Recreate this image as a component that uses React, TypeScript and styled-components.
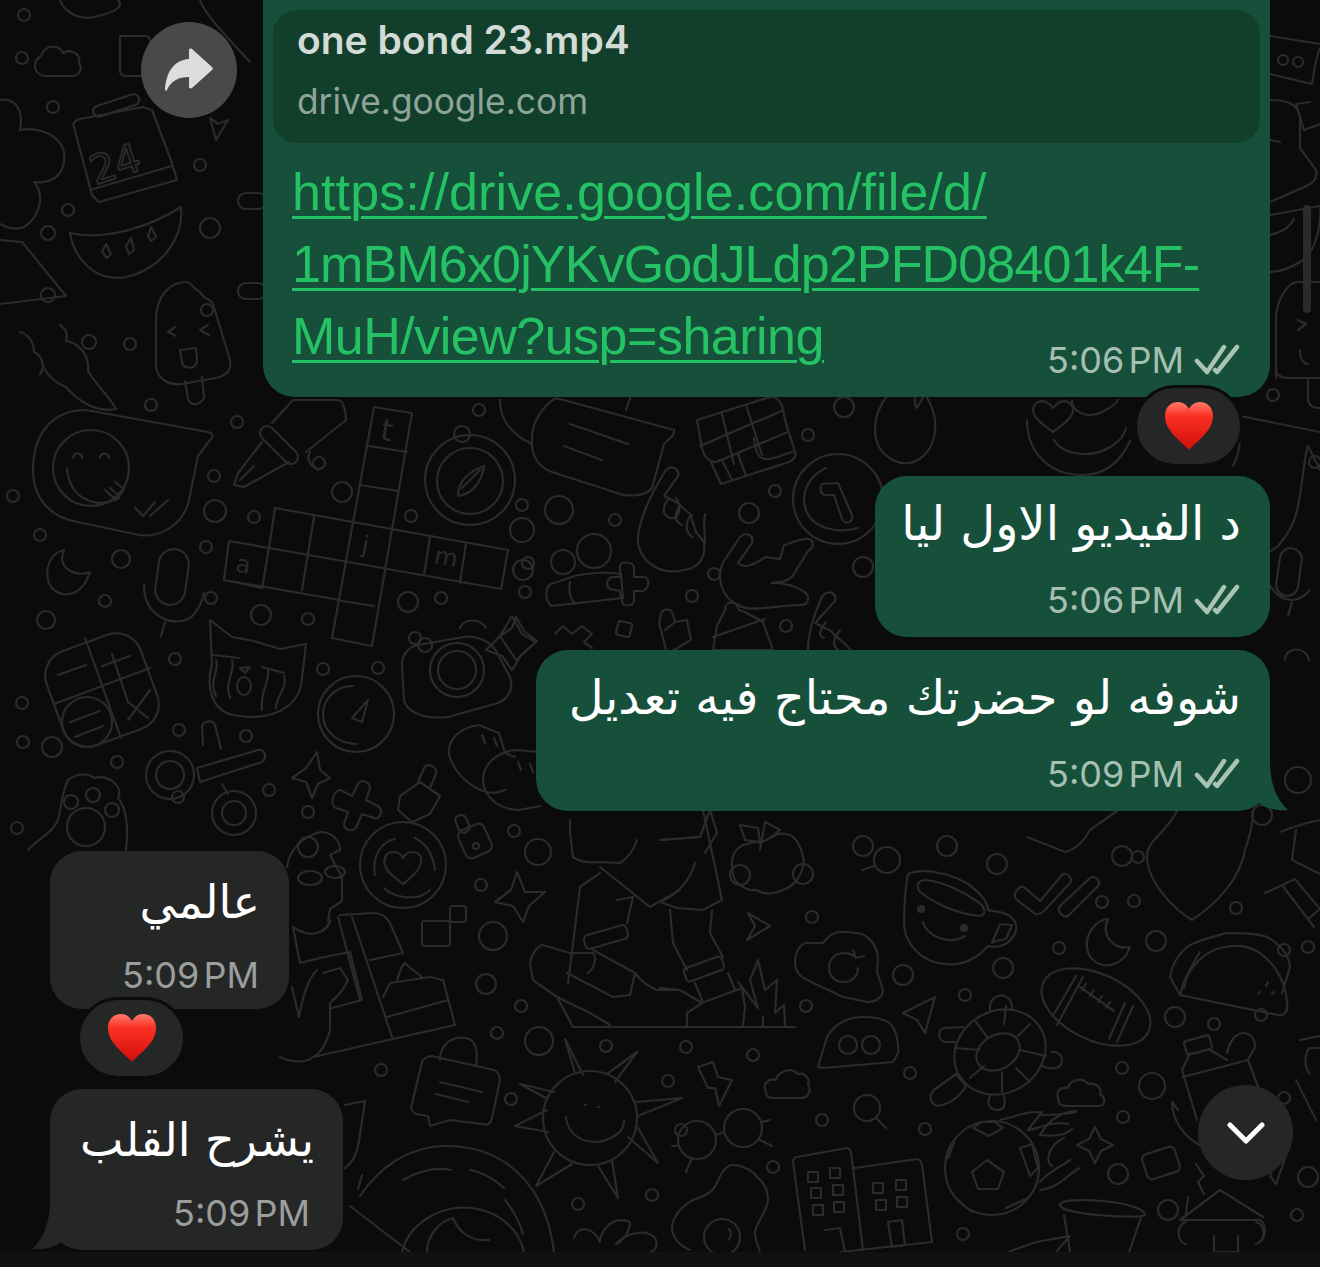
import React from "react";
import styled, { createGlobalStyle } from "styled-components";

const GlobalStyle = createGlobalStyle`
  html, body {
    margin: 0;
    padding: 0;
    background: #0b0b0b;
  }
`;

const Screen = styled.div`
  position: relative;
  display: flex;
  flex-direction: column;
  width: 1320px;
  height: 1267px;
  overflow: hidden;
  background: #0b0b0b;
  font-family: Inter, "Liberation Sans", sans-serif;
`;

const WallpaperSvg = styled.svg`
  position: absolute;
  inset: 0;
  fill: none;
  stroke: #2b2b2b;
  stroke-width: 2.2;
  stroke-linecap: round;
  stroke-linejoin: round;
  text {
    fill: #2b2b2b;
    stroke: none;
    font-family: "DejaVu Sans", sans-serif;
  }
  text.outline {
    fill: none;
    stroke: #2b2b2b;
    stroke-width: 1.8;
  }
`;

const Thread = styled.div`
  position: relative;
  flex: 1;
  display: flex;
  flex-direction: column;
  padding: 0 50px;
`;

const Bubble = styled.div<{ $out?: boolean; $gap?: number; $width: number; $height?: number }>`
  position: relative;
  box-sizing: border-box;
  width: ${(p) => p.$width}px;
  height: ${(p) => p.$height ?? 161}px;
  margin-top: ${(p) => p.$gap ?? 0}px;
  align-self: ${(p) => (p.$out ? "flex-end" : "flex-start")};
  padding-right: 30px;
  border-radius: 32px;
  background: ${(p) => (p.$out ? "#17503a" : "#252726")};
`;

const LinkBubble = styled.div`
  position: relative;
  box-sizing: border-box;
  align-self: flex-end;
  width: 1007px;
  height: 397px;
  padding: 10px 10px 0;
  border-radius: 0 0 32px 32px;
  background: #17503a;
`;

const Preview = styled.div`
  box-sizing: border-box;
  height: 133px;
  padding: 8px 24px 0;
  border-radius: 24px;
  background: #123e2c;
`;

const PreviewTitle = styled.div`
  font-size: 39px;
  line-height: 44px;
  font-weight: 600;
  color: #d3dbd6;
`;

const PreviewHost = styled.div`
  margin-top: 19px;
  font-size: 35.3px;
  line-height: 42px;
  color: #8fa59a;
`;

const UrlText = styled.a`
  display: block;
  margin: 13px 0 0 19px;
  font-family: "Liberation Sans", Arial, sans-serif;
  font-size: 52px;
  line-height: 72px;
  color: #25c265;
  text-decoration: underline;
  text-decoration-thickness: 3px;
  text-underline-offset: 6px;
`;

const UrlLine = styled.span<{ $track: number }>`
  display: block;
  letter-spacing: ${(p) => p.$track}px;
`;

const MessageText = styled.div<{ $small?: boolean }>`
  position: relative;
  height: 100px;
  margin-right: -1px;
  font-family: "DejaVu Sans", sans-serif;
  font-size: ${(p) => (p.$small ? 46 : 48)}px;
  line-height: ${(p) => (p.$small ? 102 : 95)}px;
  text-align: right;
  color: #fff;
`;

const Meta = styled.div<{ $out?: boolean; $pull?: number; $inset?: number }>`
  position: relative;
  display: flex;
  justify-content: flex-end;
  align-items: center;
  gap: 10px;
  height: 40px;
  margin-top: ${(p) => p.$pull ?? 4}px;
  margin-right: ${(p) => p.$inset ?? 0}px;
  font-size: 36px;
  word-spacing: -6px;
  color: ${(p) => (p.$out ? "#a5bfb2" : "#9c9d9d")};
`;

const Reaction = styled.div<{ $side: "left" | "right" }>`
  position: absolute;
  ${(p) => p.$side}: 27px;
  bottom: -70px;
  display: flex;
  align-items: center;
  justify-content: center;
  width: 103px;
  height: 76px;
  border: 3px solid #0b0b0b;
  border-radius: 41px;
  background: #252626;
`;

const ForwardButton = styled.div`
  position: absolute;
  left: -122px;
  top: 22px;
  display: flex;
  align-items: center;
  justify-content: center;
  width: 96px;
  height: 96px;
  border-radius: 50%;
  background: #48494b;
`;

const ScrollButton = styled.div`
  position: absolute;
  right: 27px;
  bottom: 72px;
  display: flex;
  align-items: center;
  justify-content: center;
  width: 95px;
  height: 95px;
  border-radius: 50%;
  background: #252726;
`;

const ScrollThumb = styled.div`
  position: absolute;
  top: 205px;
  right: 9px;
  width: 8px;
  height: 108px;
  border-radius: 4px;
  background: #2b2b2b;
`;

const TailSvg = styled.svg<{ $side: "left" | "right" }>`
  position: absolute;
  bottom: 0;
  ${(p) => p.$side}: -18px;
`;

const BottomBar = styled.div`
  position: relative;
  height: 15px;
  background: #101211;
`;

const dots: [number, number, number][] = [
  [24, 15, 6], [22, 58, 6], [53, 107, 6], [48, 233, 7], [68, 210, 6], [48, 295, 7], [89, 342, 7],
  [130, 344, 6], [151, 405, 6], [210, 228, 10], [200, 165, 6], [207, 310, 6], [13, 496, 6],
  [40, 535, 6], [121, 559, 9], [46, 620, 9], [105, 601, 6], [237, 422, 6], [214, 476, 6],
  [215, 511, 11], [254, 517, 6], [206, 547, 6], [211, 598, 6], [261, 615, 10], [308, 619, 6],
  [319, 463, 6], [342, 492, 10], [411, 516, 6], [408, 602, 10], [441, 598, 6], [522, 530, 12],
  [22, 703, 6], [23, 742, 6], [52, 747, 10], [117, 762, 6], [175, 659, 6], [323, 669, 6], [378, 668, 6],
  [415, 638, 6], [179, 730, 6], [246, 736, 6], [178, 797, 6], [269, 790, 6], [308, 812, 6],
  [17, 828, 6], [523, 570, 10], [522, 505, 6], [559, 510, 14], [479, 410, 6],
  [528, 563, 6], [525, 592, 6], [615, 520, 6], [749, 513, 10], [775, 491, 6],
  [808, 435, 6], [844, 407, 10], [863, 567, 10], [714, 574, 6], [692, 596, 6], [786, 626, 6],
  [308, 847, 10], [514, 831, 6], [538, 852, 13], [481, 885, 6], [493, 936, 14],
  [486, 984, 10], [521, 1006, 6], [497, 1033, 6], [539, 1041, 14], [606, 1046, 6], [668, 1081, 6],
  [681, 1130, 6], [381, 1070, 6], [325, 1131, 6], [511, 1099, 6], [578, 1204, 6], [652, 1195, 6],
  [740, 875, 10], [803, 874, 10], [812, 917, 6], [863, 846, 10], [947, 846, 10], [997, 864, 10], [903, 975, 10],
  [1003, 968, 10], [965, 995, 6], [806, 1006, 6], [910, 1073, 6], [686, 1047, 6], [753, 1055, 6],
  [822, 1120, 6], [925, 1129, 6], [773, 1167, 6], [963, 1234, 6], [1138, 857, 6], [1122, 856, 10],
  [1262, 815, 10], [1102, 902, 6], [1134, 901, 6], [1236, 908, 6], [1059, 948, 6], [1156, 941, 10],
  [1308, 947, 6], [1261, 1015, 6], [1175, 1017, 10], [1214, 1024, 6], [1122, 1068, 6], [1152, 1086, 13],
  [1284, 1098, 6], [1123, 1117, 6], [1118, 1174, 10], [1168, 1210, 10], [1297, 1215, 6],
  [1308, 1177, 10], [1273, 395, 6], [1298, 780, 13], [1315, 462, 6], [1284, 950, 6],
];

function Wallpaper() {
  return (
    <WallpaperSvg width={1320} height={1252} viewBox="0 0 1320 1252">
      {dots.map(([cx, cy, r], i) => (
        <circle key={i} cx={cx} cy={cy} r={r} />
      ))}

      {/* top left */}
      <path d="M41 56c4-12 18-12 22-3 8-5 18 1 16 10 5 8-2 14-10 13H46c-12 0-15-14-5-20z" />
      <path d="M0 100c14-2 24 8 20 30 18-4 48 6 44 32-2 16-16 22-30 20 12 14 4 34-6 42-8 8-20 4-28 0" />
      <path d="M0 240l22 2 44 54-66 8" />
      <path d="M74 127c-2-5 2-7 6-8l63-12 9 3 20 53 5 17-78 22-7-7z" />
      <path d="M90 190l82-24" />
      <rect x="92" y="100" width="48" height="11" rx="5.5" transform="rotate(-18 116 105)" />
      <text className="outline" x="90" y="178" fontSize="40" transform="rotate(-18 115 165)">24</text>
      <path d="M120 36h26c4 0 4 4 4 6v34h-24c-4 0-6-2-6-6z" />
      <path d="M70 233c34 8 80-6 111-26 3 32-20 62-55 70-32 6-52-20-56-44z" />
      <path d="M102 252l4-8 5 10-4 4zM126 246l5-8 3 12-5 4zM148 236l3-9 5 10-5 4z" />
      <path d="M156 320c0-24 14-38 30-38 6 0 8 8 14 10 4 8 10 6 13 12l17 56c2 10-4 16-14 18l-34 6c-14 2-26-6-26-20z" />
      <path d="M185 381l3 18c2 8 14 6 16-2l-2-20M175 327l-7 5 8 4M208 325l-8 5 9 5" />
      <path d="M180 350l16-2 1 12c0 10-14 10-15 2z" />
      <path d="M60 325c6 4 8 10 6 16 14 2 24 16 22 30 8 14 22 26 28 38-20 4-38-8-50-22-10-4-20-12-24-24" />
      <path d="M20 332c8 2 14 10 14 20 8 4 12 14 6 22" />
      <path d="M210 118l6 22 12-20-10 4zM60 0c4 12 20 22 38 16 18-4 26-10 20-16M200 0c4 14 30 40 50 62" />
      <rect x="238" y="193" width="28" height="16" rx="8" />
      <rect x="238" y="283" width="28" height="16" rx="8" />

      {/* speech bubble, smiley */}
      <path d="M86 410l122 22c6 2 6 4 2 8l-12 16-9 44c-6 26-30 38-50 35l-66-14c-26-6-40-26-40-50 0-36 18-61 53-61z" />
      <circle cx="91" cy="468" r="38" />
      <path d="M67 468c2 30 28 42 52 30M73 458c1-6 8-6 9 0M100 458c1-6 8-6 9 0" />
      <path d="M105 490l11 10 8-11-9-7M110 488l7 6" />
      <path d="M135 508l8 8 12-14M150 516l18-16" />

      {/* pen */}
      <path d="M272 423l21-23h45c6 0 8 14 8 20l-40 32" />
      <rect x="255" y="438" width="48" height="14" rx="7" transform="rotate(45 279 445)" />
      <path d="M262 442l-24 31-4 12 10 2 45-25M240 480l14-14M310 452c-4 6 0 14 8 18" />

      {/* crossword */}
      <path d="M374 407l38 6-40 233-40-8zM275 508l233 42-7 39-232-41zM229 541l40 7-7 40-38-8zM224 580l116 20" />
      <path d="M369 446l38 6M360 485l38 6M336 600l38 6M314 517l-12 73M430 537l-6 38M466 543l-6 40" />
      <text x="381" y="440" fontSize="30" transform="rotate(10 385 430)">t</text>
      <text x="362" y="553" fontSize="24" transform="rotate(10 365 545)">j</text>
      <text x="236" y="572" fontSize="24" transform="rotate(10 240 565)">a</text>
      <text x="434" y="565" fontSize="24" transform="rotate(10 445 560)">m</text>

      {/* compass */}
      <circle cx="470" cy="480" r="45" />
      <circle cx="470" cy="481" r="33" />
      <circle cx="462" cy="434" r="8" />
      <path d="M458 496c0-14 10-24 26-30-2 16-12 28-26 30zM462 488l18-18" />

      {/* mic, moon */}
      <rect x="157" y="549" width="30" height="56" rx="15" transform="rotate(8 172 577)" />
      <path d="M144 585c0 30 24 38 36 36 12 0 20-12 24-28M165 622l-4 14" />
      <path d="M64 550c-18 4-22 30-10 40 14 10 30 2 36-18-14 6-34-4-26-22z" />

      {/* calculator */}
      <rect x="52" y="640" width="100" height="100" rx="26" transform="rotate(-20 102 690)" />
      <path d="M85 638l36 100M54 704l96-36M58 675l28-10M112 654l16 48M102 666l28-10M128 702l20 16M150 690l-22 30" />
      <circle cx="87" cy="722" r="25" />
      <path d="M70 722l30-11M75 737l28-11" />

      {/* cat */}
      <path d="M210 620l22 17 22 4 26 8 26-5-4 34c-2 32-34 42-62 38-30-2-34-30-28-52z" />
      <path d="M213 655l26 3M262 667l22 6M216 660c4 12-8 20 0 36M232 660c4 12-8 20-2 38M268 670c2 12-8 20-6 40M284 676c4 12-8 20-8 32" />
      <ellipse cx="244" cy="686" rx="7" ry="9" />
      <path d="M240 668l10-1-5 6z" />

      {/* gauge */}
      <circle cx="356" cy="714" r="38" />
      <path d="M353 686c-20 0-30 16-30 28 0 20 18 30 34 30" />
      <path d="M352 718l16-18-6 22z" />

      {/* camera */}
      <path d="M402 665c0-10 6-18 16-20l46-8c12-2 26 4 32 14l14 26c4 12-2 22-12 26l-50 14c-14 2-38 0-44-16z" />
      <circle cx="457" cy="670" r="27" />
      <circle cx="457" cy="670" r="19" />
      <circle cx="425" cy="645" r="7" />
      <path d="M460 628c4-10 20-10 26 0M512 616l10 18 14 8-14 12-10 16-10-14-16-6 14-14z" />

      {/* scissors */}
      <circle cx="170" cy="775" r="24" />
      <circle cx="170" cy="775" r="14" />
      <path d="M197 768l61-18c6-2 10 8 4 12l-62 20zM203 745l-1-18c0-6 12-8 13-2l6 24M222 784l6 10" />
      <circle cx="234" cy="813" r="22" />
      <circle cx="234" cy="813" r="12" />

      {/* paw */}
      <path d="M28 850c8-10 24-16 30-30 4-16 4-28 10-40 10-8 22-6 26-2 14-4 30 8 24 20 10 12 10 34 8 52" />
      <circle cx="86" cy="827" r="19" />
      <circle cx="71" cy="802" r="7" />
      <circle cx="93" cy="795" r="7" />
      <circle cx="112" cy="810" r="7" />

      {/* star, plus, lock */}
      <path d="M317 752l3 18 10 8-12 6-6 14-6-16-14-4 14-10z" />
      <path d="M340 790l12 6 6-12c2-6 12-2 12 4l-4 12 12 6c6 4 2 14-4 12l-12-4-6 14c-4 4-12 2-12-4l4-12-12-4c-6-2-4-16 4-18z" />
      <path d="M400 796l20-14 20 14-10 18-18 8-14-12zM418 782l6-14c2-6 14-2 12 6l-6 14" />

      {/* dumplings */}
      <path d="M449 755c-2-16 12-28 30-30l10 4 10 4 6 20 10 4M505 790c-20 10-48-10-56-35" />
      <path d="M483 780c0-14 12-28 32-30l25 2M483 780c0 16 16 30 36 30l21-4" />
      <path d="M482 735l3 8M494 738l3 8M518 762l3 8M530 764l3 8" />

      {/* speech bubble 2 */}
      <path d="M556 398l118 32c2 4-6 10-10 14l-12 44c-6 8-24 10-38 4l-62-20c-12-4-22-16-20-34 0-14 8-30 24-40z" />
      <path d="M570 424l58 20M564 446l38 14" />
      <path d="M500 400c0 20 10 34 32 44M630 398l-4 12" />

      {/* gift */}
      <path d="M697 420l70-22c6-2 12 0 15 8l6 26-72 30c-8 0-12-6-14-14zM700 446l84-36M722 414l12 50M746 405l16 50" />
      <path d="M710 460l11 24 68-22c4-2 8-6 6-10l-10-32M732 480l-10-20M746 476l-8-22M754 438c2 18 6 24 20 20l18-6" />

      {/* hands */}
      <path d="M666 470c6-6 14 0 12 6l-14 20 12 6 14 12 6 18 8 10c2 14-4 26-20 28-24 6-42-8-46-26-2-20 14-52 28-74z" />
      <path d="M668 500c-4 4-8 14 2 18 10 2 12-12 6-20M680 505c-4 6-8 16 2 20M692 515c-6 4-8 16 0 22M705 514c-2 12 0 18 0 28" />
      <path d="M740 537c6-6 14-2 12 6l-14 20c8 8 20-2 28-6l14 2 4-14c8-2 24-10 28-4 2 4 0 8-4 10l-16 26c-10 6-8 4-20 6 16 0 34 6 36 14 0 8-4 8-8 8-22 0-50 8-62 0-18-8-22-30-14-44z" />

      {/* clock */}
      <circle cx="838" cy="499" r="45" />
      <path d="M826 468c-18 8-26 26-20 42 6 18 30 24 52 18" />
      <path d="M822 484l16-1 14 32c2 8-8 10-10 4l-8-24-10 0c-4-2-4-8-2-11z" />

      {/* people */}
      <circle cx="594" cy="551" r="17" />
      <circle cx="563" cy="562" r="12" />
      <path d="M547 600c-2-8 0-14 4-16l18-6c14-6 40-6 52-4l2 24-72 8zM570 582c-2 8 0 18 6 22" />
      <path d="M612 577h8l0-10c0-6 12-6 14 0v10h10c6 0 6 12-2 14h-8v10c-2 6-12 6-12 0l-2-10-10-2c-4-2-4-10 2-12z" />

      {/* row just above the long bubble */}
      <path d="M516 617l8 14 13 10-13 12-8 7-8-12-8-12 12-8zM555 634l8-8 9 8 10-8 10 8-8 8 8 6" />
      <rect x="617" y="622" width="14" height="14" rx="2" transform="rotate(14 624 629)" />
      <path d="M661 630c-4-8 0-12 0-16 2-6 10-6 12 0l2 8 12-2 4 20-24 14zM675 622l-10 8" />
      <path d="M725 610c0-10 12-10 14 0l6 2 18 10 10 28h-60l4-24zM713 637l52-18" />
      <path d="M823 595c8-6 14 0 12 6l-20 22 16 8c6 8 16 12 20 20M826 622c-4 6-10 14-2 16M840 630c-4 6-10 14-2 20M808 650c0-18 6-36 15-55" />

      {/* girl with phone */}
      <path d="M287 867c2-16 14-30 33-35 12 0 20 8 20 18l-10 5 12 22 0 24-12 8-2 12" />
      <ellipse cx="310" cy="878" rx="12" ry="7" />
      <ellipse cx="335" cy="872" rx="10" ry="6" />
      <path d="M293 927c8 6 18 8 24 6 8-2 13-8 13-13" />
      <path d="M340 915l33-2c8 0 14 4 17 10l13 30-33 7M338 917l22 83M352 917l40 120" />
      <path d="M293 927l7 36 20-5 30-6 12 48-30 8" />
      <path d="M323 973l17-5 8 12c-4 10-10 16-18 23M317 970c-8 8-14 24-18 47l-7-30" />
      <path d="M330 1003v27c-4 14-10 24-17 27-6 6-20 6-33 0M313 1057l142-32" />
      <path d="M383 997l7-14 40-6 13 3 12 45M387 1017l61-17M397 982c2-10 4-16 8-19 6 6 12 10 17 14" />

      {/* heart target */}
      <circle cx="403" cy="865" r="43" />
      <path d="M375 875c-4-20 8-34 20-36M415 838c12 6 18 16 20 32M384 888c10 10 34 14 46 2" />
      <path d="M403 884c-8-6-22-16-18-26 2-8 14-8 18 0 4-8 16-8 18 0 2 10-10 20-18 26z" />

      {/* bottle, star, squares */}
      <rect x="461" y="826" width="28" height="30" rx="6" transform="rotate(-24 475 841)" />
      <rect x="457" y="815" width="11" height="18" rx="5" transform="rotate(-24 462 824)" />
      <circle cx="476" cy="846" r="3" />
      <path d="M517 872l8 20 20 0-16 14-6 16-10-16-18-4 16-12z" />
      <rect x="422" y="921" width="28" height="25" rx="2" />
      <rect x="450" y="906" width="16" height="16" rx="3" />

      {/* chat lock */}
      <path d="M422 1062c2-4 6-6 10-6l62 14c4 2 6 6 6 10l-8 38c-2 6-4 8-10 6l-32-4-20 6-2-10-12-2c-4-2-6-6-4-10z" />
      <path d="M440 1082l42 10M436 1094l32 8M440 1060c0-16 12-24 26-22 10 2 12 14 10 28" />

      {/* sun */}
      <circle cx="590" cy="1118" r="47" />
      <path d="M566 1117c2 24 30 32 50 18 6-4 8-10 8-14M585 1105h1M598 1107h1" />
      <path d="M575 1073l-10-34 18 36M607 1074l30-22-22 30M636 1102l46-4-44 18M638 1128l20 35-30-26M612 1160l6 38-20-32M572 1164l-36 22 18-34M548 1132l-33-6 32-16M546 1098l-26-14 34 8" />

      {/* big round bottom */}
      <path d="M360 1196c20-30 50-50 86-50 60 0 100 40 108 106" />
      <path d="M403 1180c10-6 30-14 48-10M470 1170c12 2 26 10 34 18M505 1200c8 10 14 20 18 34M402 1252c6-26 36-48 70-44 30 4 48 24 52 44M427 1252c0-14 10-30 26-34 4 10 14 24 36 22" />
      <path d="M350 1206l60 46M362 1175l-4 14" />
      <path d="M574 1238c4-14 20-10 26 4 0-8 10-28 30-20 0 10-8 20-14 22 10-12 34-16 40-4 2 6-2 12-6 12" />
      <path d="M345 1105l20-4-6 40c-2 16-10 24-14 27" />

      {/* leg figure */}
      <path d="M570 820v13l3 24c8 6 18 6 27 5l20 1c10-6 14-14 17-23M600 867l50 40 30-17M660 840l40-3 10-27 7 23-12 20M580 887l20-14M580 887l-12 96" />
      <path d="M617 900l16-3-6 26" />
      <rect x="584" y="930" width="44" height="14" rx="4" transform="rotate(-16 606 937)" />
      <path d="M593 950l42 23-5 22-17 2-46-24M635 973c6 8 14 14 22 17h23" />
      <path d="M530 963c2-10 8-18 13-18l27 8h23c4 4 2 14-5 20M530 963l3 17 24 17 16 30M557 997l33 16 20 12M573 1027h222" />
      <path d="M660 902l17 6 26 2 19-10-19-90M660 902c18-8 30-22 35-39M660 840l40-3" />
      <path d="M670 910l3 33 14 27M712 910l-2 23 13 24" />
      <rect x="684" y="962" width="40" height="14" rx="4" transform="rotate(-20 704 969)" />
      <path d="M695 983l7 17M728 973l7 17M660 988l20 2 22 13-15 10v13M702 1003l40-15 3 19-2 18" />
      <path d="M738 982l20 26-8-28 8-20 7 30 12-10-2 33 9-8 1 20M763 1017v10" />

      {/* apple, cup */}
      <path d="M760 843c-6-4-12 2-17 2-8 4-11 10-11 18 0 10 2 18 6 20 6 6 12 8 19 7 6 4 12 4 16 3 12-2 20-8 24-13 6-10 8-18 6-23-2-12-8-20-13-22-6-2-12-2-18 2-4 2-8 4-12 6z" />
      <path d="M760 842l-15-2-5-15 18 3zM760 850l5-28 15 8-13 10" />
      <circle cx="887" cy="860" r="13" />
      <path d="M874 866l-12 4" />
      <path d="M908 874c14-6 40-2 60 10 14 10 20 18 20 26 4 2 16 0 24 8 6 6 6 12 0 20-6 8-16 10-24 8-14 16-32 22-54 16-18-6-30-22-30-40 0-14 2-42 4-48z" />
      <path d="M926 880c-6 0-12 4-6 12 10 8 34 22 60 24 8-2 4-10-2-14-14-10-34-20-52-22zM923 922c4 14 26 24 42 14M1000 924l12 1-6 14-10 2-4 2z" />
      <circle cx="921" cy="909" r="3" fill="#2b2b2b" />
      <circle cx="964" cy="928" r="3" fill="#2b2b2b" />

      {/* cloud refresh, arrows, blob */}
      <path d="M795 963c0-12 6-20 12-20h16c6-8 12-11 17-11 14 0 24 2 27 5 8 6 11 14 11 23l-1 12 6 18c0 8-8 12-16 12l-24-5-36-17c-8-4-12-10-12-17z" />
      <path d="M856 958c-8-8-22-6-26 4-4 12 4 20 14 20 8 0 14-6 14-14M853 950l3 8 8-2" />
      <path d="M748 913l22 13-23 14 8-14zM903 1013l32-16-10 36-8-13z" />
      <path d="M818 1067l9-30c8-14 22-20 36-20 16 0 26 4 30 10 4 8 6 16 5 26l-5 9-70 6z" />
      <circle cx="848" cy="1045" r="9" />
      <circle cx="871" cy="1045" r="9" />

      {/* turtle */}
      <ellipse cx="1000" cy="1052" rx="47" ry="41" transform="rotate(-30 1000 1052)" />
      <ellipse cx="998" cy="1052" rx="23" ry="17" transform="rotate(-30 998 1052)" />
      <path d="M990 1010c-2-18 22-20 22-2M955 1042h-8c-10 0-10-14-2-14l18-1M1052 1052c10 0 12 8 8 14-4 4-14 2-18 0M938 1106c-8-2-10-10-4-16l22-16 10 12c-6 10-16 18-28 20zM990 1096c-4 8 0 14 8 14 6 0 8-6 6-14" />
      <path d="M976 1022l12 16M1006 1006l-2 18M1030 1024l-12 12M984 1066l-14 12M1002 1072v20M1016 1068l14 14M955 1048l24 2M1020 1050l26 6" />

      {/* small row */}
      <path d="M698 1067l15-5 5 15 14 3-13 26-4-18h-7z" />
      <path d="M766 1092c-4-8 2-14 10-12 2-8 14-14 22-6 8-2 12 6 10 10 4 6 0 14-6 14h-30c-4 0-6-2-6-6z" />
      <circle cx="867" cy="1108" r="13" />
      <path d="M876 1118l10 10" />
      <circle cx="697" cy="1140" r="19" />
      <circle cx="743" cy="1128" r="19" />
      <path d="M716 1135l8-3M672 1146h6M762 1122l8-2M760 1140l12 6M692 1158l-6 14" />

      {/* buildings */}
      <path d="M805 1250l-12-88c0-3 2-5 4-5l50-9c2 0 3 2 4 4l12 98M855 1168l62-9c2 0 4 2 5 6l10 77-92 10" />
      <path d="M825 1230l15-2 5 24M888 1222l14-2 3 25-13 2z" />
      <rect x="808" y="1172" width="10" height="10" /><rect x="830" y="1168" width="10" height="10" />
      <rect x="811" y="1188" width="10" height="10" /><rect x="833" y="1185" width="10" height="10" />
      <rect x="813" y="1205" width="10" height="10" /><rect x="834" y="1202" width="10" height="10" />
      <rect x="873" y="1183" width="10" height="10" /><rect x="896" y="1180" width="10" height="10" />
      <rect x="876" y="1200" width="10" height="10" /><rect x="897" y="1197" width="10" height="10" />

      {/* ball, avocado */}
      <circle cx="992" cy="1168" r="47" />
      <path d="M987 1160l17 12-6 17h-20l-6-17zM973 1128l16 8 14-8-8-6h-14zM1020 1148l12-4 6 24-8 8zM948 1158l6-16M958 1200l14 12M1006 1208l22-10" />
      <path d="M1000 1120c20-4 20-8 42-8l-14 18c8 0 24-10 40-6M1040 1190c20-2 30-18 40-22M1052 1166c-8-6-2-22 12-28" />
      <path d="M690 1250c-10-4-18-12-18-23 2-14 12-22 21-27 12-4 20-8 24-17 4-10 10-18 16-18 10 0 20 6 24 12 8 6 11 14 11 23 0 10-14 26-13 33 0 6 3 12 5 19" />
      <circle cx="722" cy="1237" r="18" />
      <path d="M729 1229c3 4 2 8 0 10" />

      {/* check, shield, moon */}
      <path d="M1024 887l16 14 22-26c4-4 12 4 8 8l-26 28c-4 4-8 4-10 2l-18-14c-4-6 4-14 8-12zM1060 906l30-28c4-4 12 4 8 8l-30 30c-4 2-12-4-8-10z" />
      <path d="M1177 811c-12 24-32 29-30 49 3 25 28 50 45 60 23-15 48-40 53-70 5-15 8-25 8-39" />
      <path d="M1027 837l38 15c10-2 20-12 25-22l27-19" />
      <path d="M1108 919c-18 2-28 26-16 40 12 12 32 6 38-12-14 4-30-10-22-28z" />

      {/* football, taco */}
      <ellipse cx="1096" cy="1007" rx="58" ry="33" transform="rotate(25 1096 1007)" />
      <path d="M1076 976l-22 38M1083 977l-26 48M1133 1006l-16 36M1125 1003l-16 36M1080 987l34 24M1086 984l-4 6M1094 990l-4 6M1102 996l-4 6M1110 1002l-4 6" />
      <path d="M1180 995l98 20c8 1 10-5 9-12-2-33-27-58-52-57-30 0-50 24-55 49z" />
      <path d="M1180 995l-10-18c2-14 10-24 17-30 12-8 26-10 40-14 14 0 28 0 40 4 14 8 22 18 23 30l-8 26M1200 952c-8 12-14 24-16 36M1268 982l-2 4M1260 992l-2 2M1274 992l-2 2" />
      <path d="M1265 893l30-14 25 30-12 10M1282 885l32 42" />

      {/* bottle, banana */}
      <rect x="1185" y="1038" width="26" height="14" rx="2" transform="rotate(-15 1198 1045)" />
      <path d="M1190 1053l-8 17 15 50M1210 1050l17 10M1183 1077l65-17 15 40" />
      <path d="M1227 1053c2-10 8-20 16-20 8 0 12 6 12 14l-7 13" />
      <path d="M1172 1102c0 20 14 36 28 43M1178 1110l-6-8" />
      <path d="M1300 1040l20-4M1296 1080l20 40M1320 1048h-10c-6 4-6 20 0 26" />

      {/* lower right */}
      <path d="M1095 1127l6 12 12 6-12 6-6 12-6-12-12-6 12-6z" />
      <path d="M1040 1115c14 0 40-2 36-4-10 0-26 6-36 24 16 2 26 0 32-6M1070 1160c-8 6-22 12-30 22" />
      <path d="M1058 1098c-2-6 2-12 10-10 2-8 14-12 20-4 10-2 14 6 12 10 6 4 6 12-2 12h-32c-6 0-8-4-8-8z" />
      <rect x="1144" y="1150" width="34" height="26" rx="5" transform="rotate(-18 1161 1163)" />
      <path d="M1060 1205c0-10 85-4 85 10M1060 1205c0 10 80 14 85 10M1064 1215l6 37M1141 1218l-12 34" />
      <path d="M1180 1220l40-30 43 27M1188 1197l-2 16M1180 1220l80 0c6 4 6 14 2 20M1186 1222c-10 2-10 20 0 22M1256 1222c10 2 10 20 0 22M1214 1236v16h24v-16" />
      <path d="M1196 1164l8 12-6 6 6 12M1278 1152l-8 24 6 8 10-28" />
      <path d="M1008 1252l28-10 34-6-14 16" />

      {/* right column, top */}
      <path d="M1270 36l50 8M1270 74l42 10c2-12 4-28 8-36" />
      <circle cx="1283" cy="60" r="5" />
      <circle cx="1298" cy="62" r="5" />
      <path d="M1270 100c14 0 30 2 30 20l0 28 16 22c2 10-4 14-14 18l-32 14M1270 140l10 2M1310 102l-14 2 8 26 16-6" />
      <path d="M1270 215l50-9c2 20-6 50-20 56-10 6-20 10-30 10M1270 235c14-4 20-8 24-16" />
      <path d="M1276 378v-60c0-14 10-36 22-36h22M1276 370c0 4 4 8 12 8h32" />
      <path d="M1298 320l8 4-8 6M1300 350c0 10 4 14 8 14M1308 380v20c2 8 8 8 12 8" />
      <path d="M1240 416l80 16M1320 470l-12-24c-4 10-4 30-10 60-2 14-8 26-20 40-4 4-10 6-14 8" />
      <rect x="1278" y="548" width="22" height="48" rx="11" transform="rotate(8 1289 572)" />
      <path d="M1270 586c14 20 30 16 40 4M1292 602l-4 14" />

      {/* flame, heart circle */}
      <path d="M887 396c-14 18-20 50 6 64 18 10 40-4 42-30 2-14-4-26-10-36l-8 14c-4-6-2-14 0-18" />
      <path d="M1072 400c-2 10 14 20 30 12 8-4 14-8 16-12M1027 420c0 34 24 55 55 55 22 0 38-12 48-34M1054 440c8 14 36 20 58 6 8-6 12-10 14-18" />
      <path d="M1053 432c-8-6-20-14-20-22 0-8 10-12 16-6l4 4 4-4c6-6 16-2 16 6 0 8-12 16-20 22z" />
      <path d="M1156 462c-4-8-4-16 0-24M1233 466c4-8 8-18 6-30M1285 660c0-14 22-14 24 0" />
      <path d="M1296 830l-4 30 28 14M1320 820c-10 2-30 8-40 12" />
    </WallpaperSvg>
  );
}

function ReadTicks() {
  return (
    <svg width="46" height="32" viewBox="0 0 46 32" fill="none" stroke="#a9c3b6" strokeWidth="4.5" strokeLinecap="round" strokeLinejoin="round">
      <path d="M3 17l10 11L30 3" />
      <path d="M21 26l2 2L43 3" />
    </svg>
  );
}

function Heart({ id }: { id: string }) {
  return (
    <svg width="50" height="50" viewBox="0 0 50 50">
      <defs>
        <linearGradient id={id} x1="0" y1="0" x2="0" y2="1">
          <stop offset="0" stopColor="#ff7a6a" />
          <stop offset="0.3" stopColor="#fb2f22" />
          <stop offset="1" stopColor="#cf0f0b" />
        </linearGradient>
      </defs>
      <path d="M25 49C17 40 1 30 1 15 1 6 7 1 14 1c5 0 9 3 11 7 2-4 6-7 11-7 7 0 13 5 13 14 0 15-16 25-24 34z" fill={`url(#${id})`} />
    </svg>
  );
}

function Tail({ side, color }: { side: "left" | "right"; color: string }) {
  return (
    <TailSvg $side={side} width="60" height="50" viewBox="0 0 60 50">
      <path
        d="M0 0H42C42 22 48 38 60 49 48 50 36 47 30 41 22 48 10 50 0 50Z"
        fill={color}
        transform={side === "left" ? "matrix(-1 0 0 1 60 0)" : undefined}
      />
    </TailSvg>
  );
}

export default function App() {
  return (
    <Screen>
      <GlobalStyle />
      <Wallpaper />
      <Thread>
        <LinkBubble>
          <ForwardButton>
            <svg width="48" height="44" viewBox="0 0 48 44" fill="#dcdddd">
              <path d="M27 1l20 18c1 1 1 2 0 3L27 40c-1 1-3 0-3-1V29C13 29 6 33 2 42c-1 1-2 1-2 0C1 24 9 12 24 11V2c0-1 2-2 3-1z" />
            </svg>
          </ForwardButton>
          <Preview>
            <PreviewTitle>one bond 23.mp4</PreviewTitle>
            <PreviewHost>drive.google.com</PreviewHost>
          </Preview>
          <UrlText href="#">
            <UrlLine $track={0.12}>https://drive.google.com/file/d/</UrlLine>
            <UrlLine $track={-0.85}>1mBM6x0jYKvGodJLdp2PFD08401k4F-</UrlLine>
            <UrlLine $track={-0.5}>MuH/view?usp=sharing</UrlLine>
          </UrlText>
          <Meta $out $pull={-32} $inset={20}>
            5:06 PM
            <ReadTicks />
          </Meta>
          <Reaction $side="right">
            <Heart id="heartA" />
          </Reaction>
        </LinkBubble>

        <Bubble $out $gap={79} $width={395}>
          <MessageText dir="rtl">د الفيديو الاول ليا</MessageText>
          <Meta $out>
            5:06 PM
            <ReadTicks />
          </Meta>
        </Bubble>

        <Bubble $out $gap={13} $width={734}>
          <Tail side="right" color="#17503a" />
          <MessageText dir="rtl">شوفه لو حضرتك محتاج فيه تعديل</MessageText>
          <Meta $out>
            5:09 PM
            <ReadTicks />
          </Meta>
        </Bubble>

        <Bubble $gap={40} $width={239} $height={158}>
          <MessageText dir="rtl" $small>عالمي</MessageText>
          <Meta>5:09 PM</Meta>
          <Reaction $side="left">
            <Heart id="heartB" />
          </Reaction>
        </Bubble>

        <Bubble $gap={80} $width={293}>
          <Tail side="left" color="#252726" />
          <MessageText dir="rtl" $small>يشرح القلب</MessageText>
          <Meta $inset={3}>5:09 PM</Meta>
        </Bubble>

        <ScrollThumb />
        <ScrollButton>
          <svg width="38" height="24" viewBox="0 0 38 24" fill="none" stroke="#ffffff" strokeWidth="5" strokeLinecap="round" strokeLinejoin="round">
            <path d="M3 4l16 16L35 4" />
          </svg>
        </ScrollButton>
      </Thread>
      <BottomBar />
    </Screen>
  );
}
